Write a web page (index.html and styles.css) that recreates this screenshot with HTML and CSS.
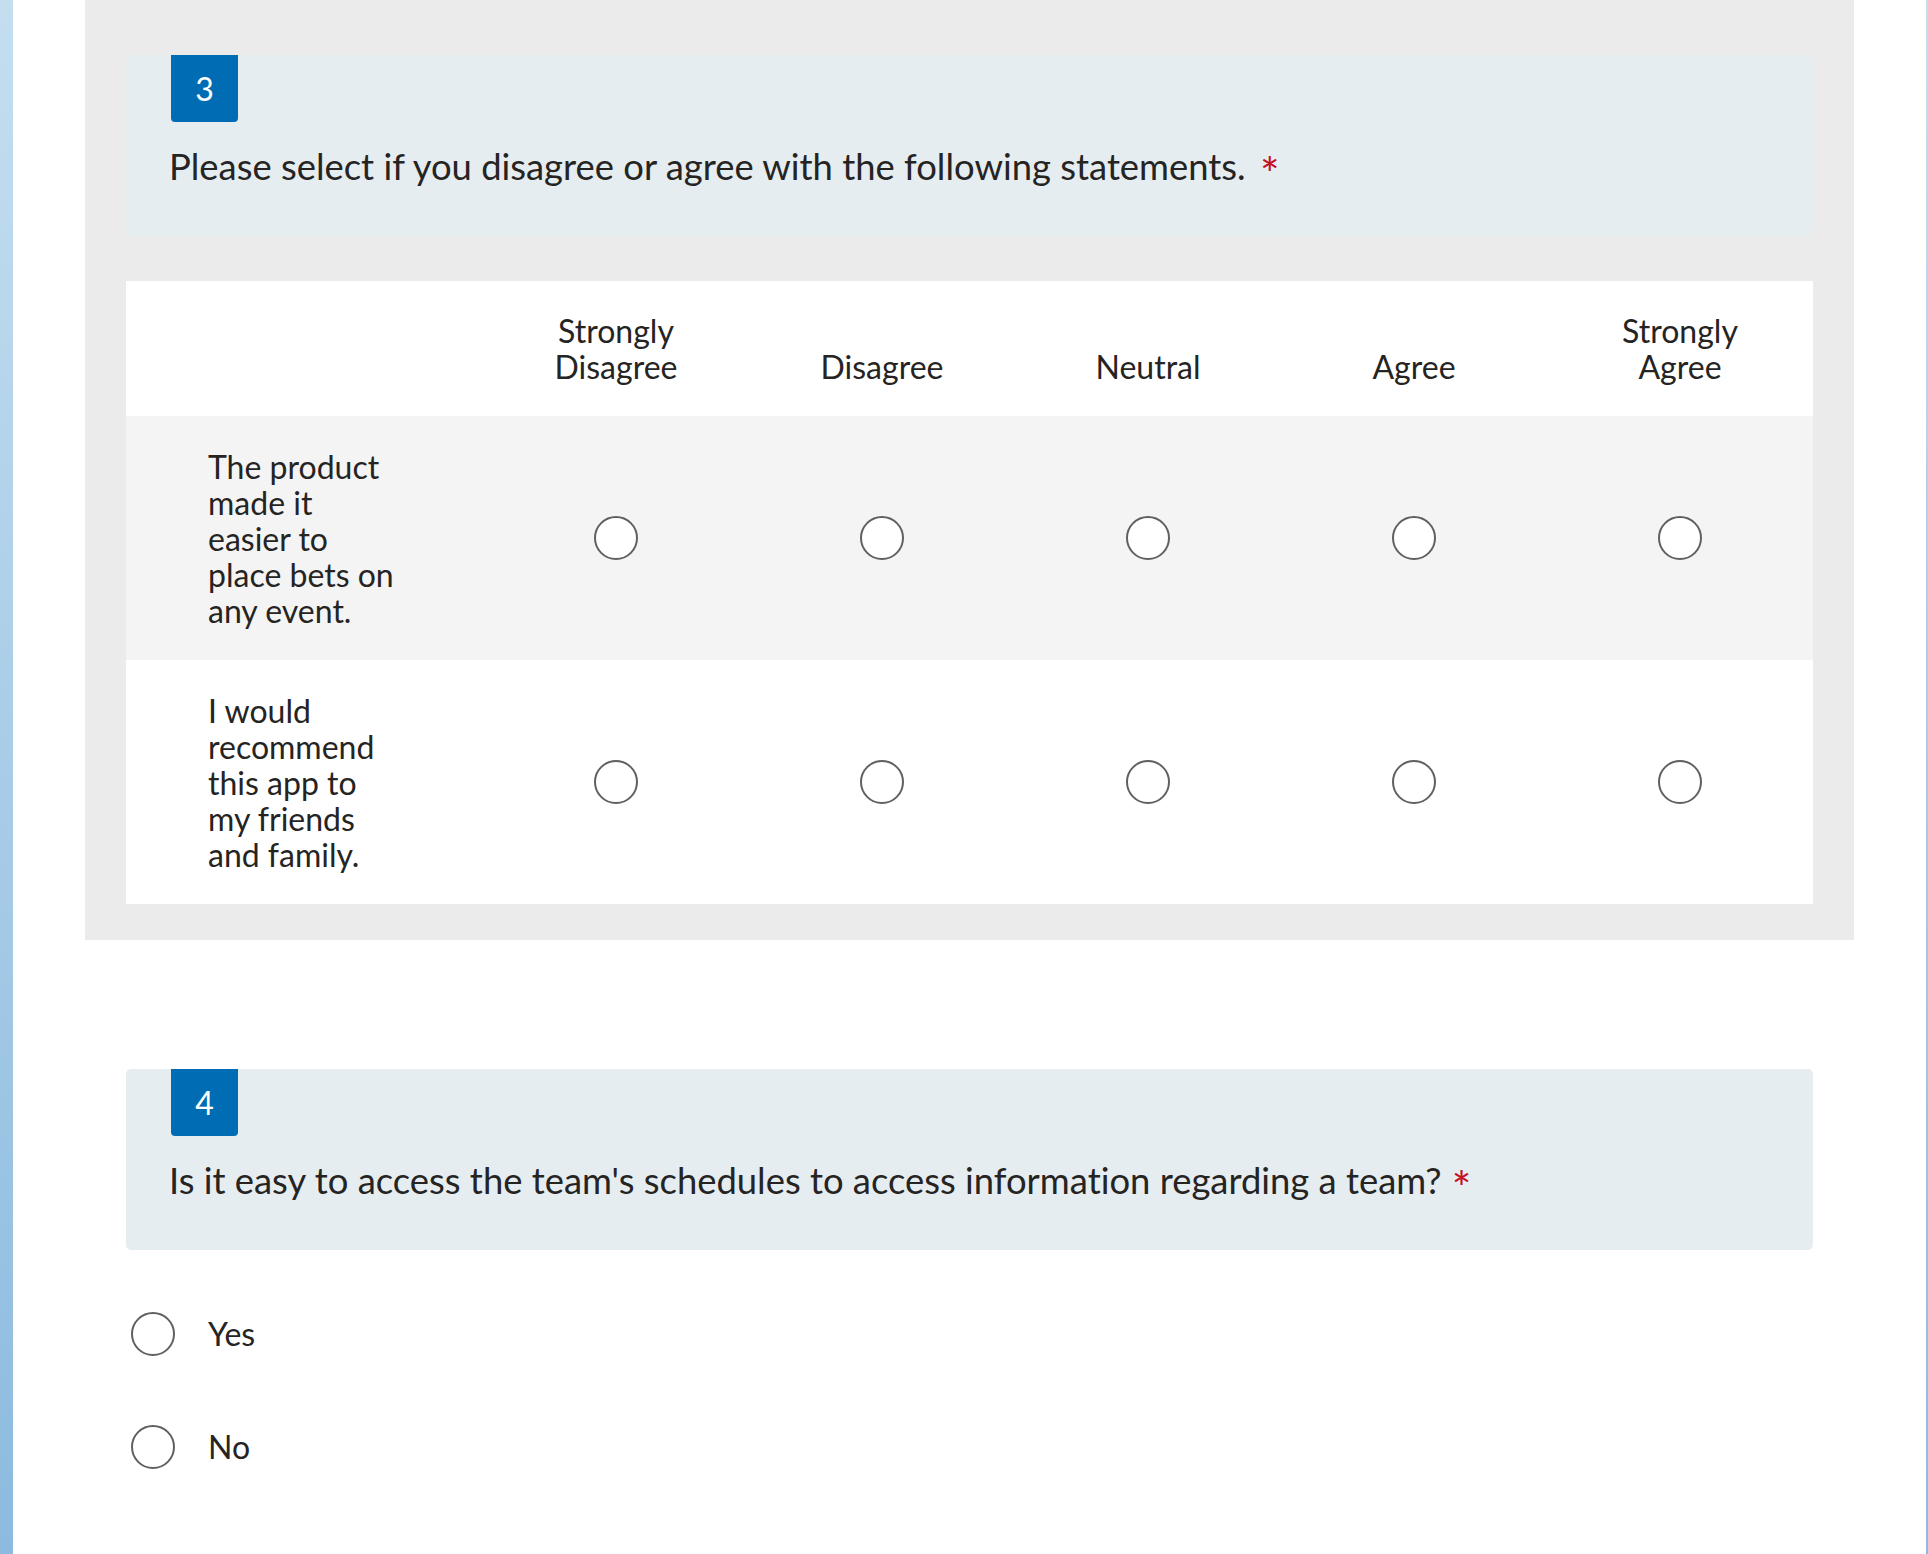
FILE: index.html
```html
<!DOCTYPE html>
<html lang="en">
<head>
<meta charset="utf-8">
<title>Survey</title>
<link rel="stylesheet" href="styles.css">
</head>
<body>
<div class="rail rail-left"></div>
<main class="page">
  <section class="question question-active">
    <div class="question-header">
      <div class="badge">3</div>
      <div class="question-title">Please select if you disagree or agree with the following statements. <span class="required required-tight">*</span></div>
    </div>
    <table class="matrix">
      <colgroup><col class="col-label"><col><col><col><col><col></colgroup>
      <thead>
        <tr>
          <th></th>
          <th>Strongly Disagree</th>
          <th>Disagree</th>
          <th>Neutral</th>
          <th>Agree</th>
          <th>Strongly Agree</th>
        </tr>
      </thead>
      <tbody>
        <tr class="row-alt">
          <td class="label"><span class="label-text">The product made it easier to place bets on any event.</span></td>
          <td><span class="radio"></span></td>
          <td><span class="radio"></span></td>
          <td><span class="radio"></span></td>
          <td><span class="radio"></span></td>
          <td><span class="radio"></span></td>
        </tr>
        <tr>
          <td class="label"><span class="label-text">I would recommend this app to my friends and family.</span></td>
          <td><span class="radio"></span></td>
          <td><span class="radio"></span></td>
          <td><span class="radio"></span></td>
          <td><span class="radio"></span></td>
          <td><span class="radio"></span></td>
        </tr>
      </tbody>
    </table>
  </section>
  <section class="question question-plain">
    <div class="question-header">
      <div class="badge">4</div>
      <div class="question-title">Is it easy to access the team's schedules to access information regarding a team?<span class="required">*</span></div>
    </div>
    <div class="options">
      <div class="option"><span class="radio"></span><span class="option-text">Yes</span></div>
      <div class="option"><span class="radio"></span><span class="option-text">No</span></div>
    </div>
  </section>
</main>
<div class="rail rail-right"></div>
</body>
</html>
```

FILE: styles.css
```css
* { box-sizing: border-box; }
html, body { margin: 0; padding: 0; }
body {
  display: flex;
  min-height: 100vh;
  background: #ffffff;
  font-family: Lato, "Open Sans", sans-serif;
  font-variant-ligatures: none;
  color: #252423;
}
.rail { flex: none; }
.rail-left { width: 13px; background: linear-gradient(#c4def0, #8cbbdf); }
.rail-right { width: 2px; background: linear-gradient(#c4def0, #8cbbdf); }
.page { flex: 1; padding: 0 72px; }

.question { padding: 0 41px; }
.question-active { background: #ebebeb; padding: 55px 41px 36px; }
.question-plain { padding: 129px 41px 0; }

.question-header {
  background: #e6edf1;
  border-radius: 5px;
  padding: 0 45px 46px;
}
.badge {
  width: 67px;
  height: 67px;
  background: #006cb4;
  color: #ffffff;
  border-radius: 0 0 4px 4px;
  display: flex;
  align-items: center;
  justify-content: center;
  font-size: 32px;
}
.question-title {
  margin-top: 20px;
  margin-left: -2px;
  font-size: 36.4px;
  line-height: 48px;
}
.required {
  color: #c50f1f;
  font-size: 46px;
  line-height: 0;
  margin-left: 10px;
  vertical-align: -11px;
}
.required-tight { margin-left: 5px; }

.matrix {
  width: 100%;
  border-collapse: collapse;
  table-layout: fixed;
  background: #ffffff;
  margin-top: 45px;
}
.col-label { width: 357px; }
.matrix th {
  font-weight: normal;
  font-size: 32px;
  line-height: 36px;
  padding: 32px 40px 31px;
  vertical-align: bottom;
  text-align: center;
}
.matrix td {
  padding: 32px 0;
  vertical-align: middle;
}
.matrix td.label {
  padding: 33px 0 31px 82px;
  font-size: 32px;
  line-height: 36px;
}
.label-text { display: block; width: 192px; }
.row-alt { background: #f4f4f4; }

.radio {
  display: block;
  width: 44px;
  height: 44px;
  border: 2px solid #606060;
  border-radius: 50%;
  margin: 0 auto;
  background: #ffffff;
}

.options { padding-top: 27px; }
.option {
  display: flex;
  align-items: center;
  height: 113px;
  padding-left: 5px;
  font-size: 32px;
}
.option .radio { margin: 0; flex: none; }
.option-text { margin-left: 33px; }
```
